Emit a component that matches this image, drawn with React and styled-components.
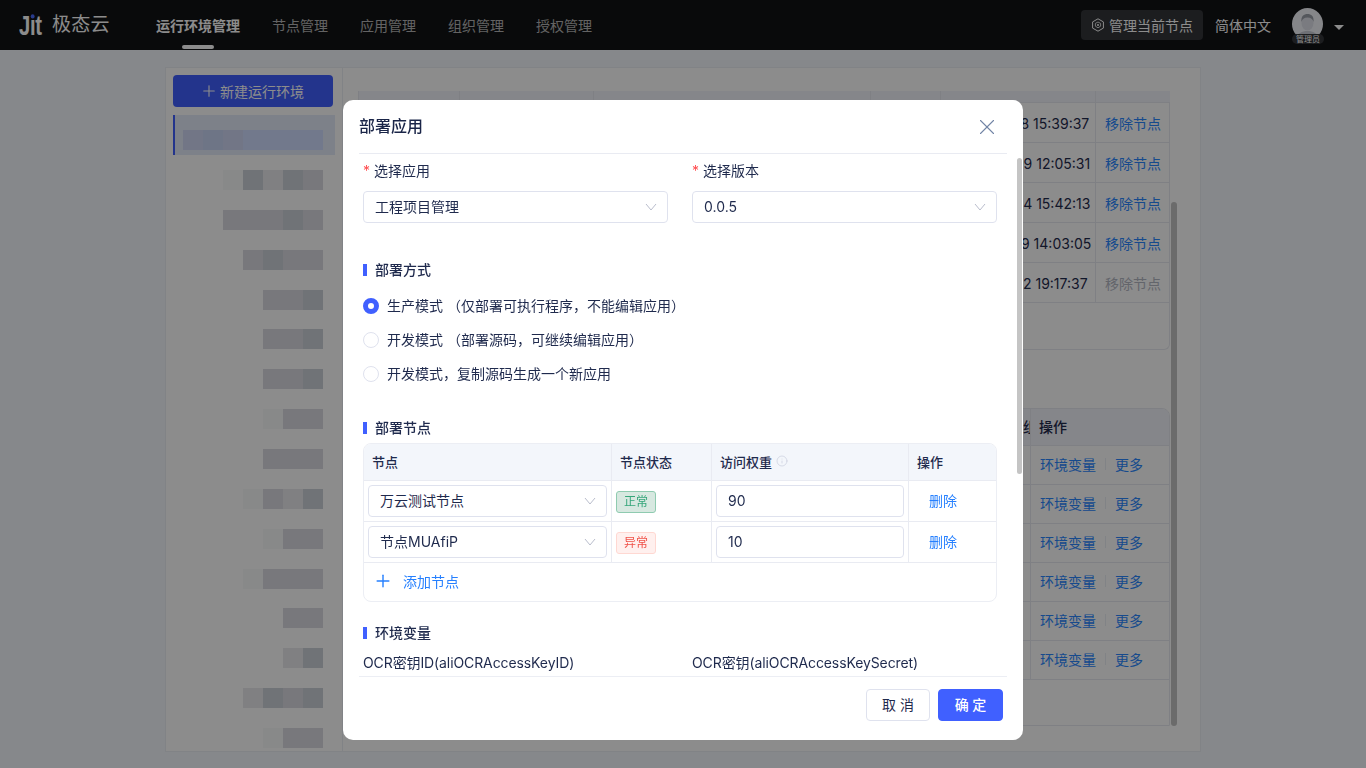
import styled, { createGlobalStyle } from 'styled-components';
import { Plus, X, Info } from 'lucide-react';

const navItems = ['运行环境管理', '节点管理', '应用管理', '组织管理', '授权管理'];

// 左侧列表是打码的，每行是从左到右的色块深浅（靠右对齐）
const activeRow = [5, 6, 5, 7, 7, 7, 7];
const blurRows = [
	[1, 4, 2, 4, 3],
	[3, 3, 3, 4, 3],
	[3, 4, 3, 3],
	[3, 3, 4],
	[3, 3, 4],
	[3, 3, 4],
	[1, 3, 3],
	[3, 3, 3],
	[1, 3, 2, 4],
	[1, 3, 3],
	[1, 3, 3, 3],
	[3, 3],
	[2, 4],
	[2, 4, 3, 4],
	[1, 3, 3],
];

const nodeTimes = [
	{ time: '2023-05-18 15:39:37' },
	{ time: '2023-05-09 12:05:31' },
	{ time: '2023-04-24 15:42:13' },
	{ time: '2023-04-19 14:03:05' },
	{ time: '2023-03-22 19:17:37', disabled: true },
];

const nodes = [
	{ name: '万云测试节点', ok: true, weight: 90 },
	{ name: '节点MUAfiP', ok: false, weight: 10 },
];

function Chevron() {
	return (
		<ChevronIcon width="12" height="8" viewBox="0 0 12 8">
			<path d="M1 1l5 6 5-6" fill="none" stroke="currentColor" strokeWidth="1" />
		</ChevronIcon>
	);
}

function App() {
	return (
		<>
			<GlobalStyle />
			<Page>
				<Header>
					<Logo>
						<LogoMark>
							Jit
							<LogoDot />
						</LogoMark>
						<LogoName>极态云</LogoName>
					</Logo>
					<Nav>
						{navItems.map((item, i) => (
							<NavItem key={item} $active={i === 0}>
								{item}
							</NavItem>
						))}
					</Nav>
					<HeaderRight>
						<ManageButton>
							<svg width="14" height="14" viewBox="0 0 14 14" fill="none">
								<path d="M7 .8l5.400 3.100v6.200L7 13.200 1.600 10.100V3.900z" stroke="currentColor" />
								<path d="M4.400 5.400L7 4l2.600 1.400v2.800L7 9.800 4.400 8.200z" stroke="currentColor" strokeWidth=".8" />
								<circle cx="7" cy="6.900" r="1" fill="currentColor" />
							</svg>
							管理当前节点
						</ManageButton>
						<Lang>简体中文</Lang>
						<Avatar>
							<svg width="31" height="32" viewBox="0 0 31 32">
								<ellipse cx="15.500" cy="16" rx="15.500" ry="16" fill="#f2f4fa" />
								<path d="M4 32c1-7 6-9 11.500-9S26 25 27 32z" fill="#c9ccd6" />
								<ellipse cx="15.500" cy="15" rx="6" ry="7.500" fill="#dee1ea" />
								<path d="M9.500 14c-.8-6 2.500-8 6-8s6.800 2 6 8c-.8-3-2.500-4.500-6-4.500s-5.200 1.500-6 4.500z" fill="#9a9ea8" />
							</svg>
							<AvatarBadge>管理员</AvatarBadge>
						</Avatar>
						<Caret />
					</HeaderRight>
				</Header>

				<Panel>
					<Sidebar>
						<NewButton>
							<Plus size={18} strokeWidth={1.5} />
							新建运行环境
						</NewButton>
						<EnvList>
							<EnvItem $active>
								{activeRow.map((tone, j) => (
									<BlurCell key={j} $tone={tone} />
								))}
							</EnvItem>
							{blurRows.map((cells, i) => (
								<EnvItem key={i}>
									{cells.map((tone, j) => (
										<BlurCell key={j} $tone={tone} />
									))}
								</EnvItem>
							))}
						</EnvList>
					</Sidebar>
					<Main>
						<NodeTable>
							<NodeHead />
							<NodeHead />
							<NodeHead />
							<NodeHead />
							<NodeHead />
							<NodeHead />
							{nodeTimes.map((row) => (
								<NodeRow key={row.time}>
									<NodeCell />
									<NodeCell />
									<NodeCell />
									<NodeCell />
									<NodeCell>{row.time}</NodeCell>
									<NodeCell>
										<TextLink $disabled={row.disabled}>移除节点</TextLink>
									</NodeCell>
								</NodeRow>
							))}
						</NodeTable>
						<Pager />
						<AppTable>
							<AppHead>所属组</AppHead>
							<AppHead $action>操作</AppHead>
							{[0, 1, 2, 3, 4, 5].map((i) => (
								<AppRow key={i}>
									<AppCell />
									<AppCell $action>
										<TextLink>环境变量</TextLink>
										<LinkDivider />
										<TextLink>更多</TextLink>
									</AppCell>
								</AppRow>
							))}
						</AppTable>
						<PageScrollbar />
					</Main>
				</Panel>

				<Mask>
					<Modal>
						<ModalHead>
							<ModalTitle>部署应用</ModalTitle>
							<X size={26} strokeWidth={1} color="#7385a6" />
						</ModalHead>
						<ModalBody>
							<FieldGrid>
								<Field>
									<FieldLabel $required>选择应用</FieldLabel>
									<Select>
										工程项目管理
										<Chevron />
									</Select>
								</Field>
								<Field>
									<FieldLabel $required>选择版本</FieldLabel>
									<Select>
										0.0.5
										<Chevron />
									</Select>
								</Field>
							</FieldGrid>

							<SectionTitle $top={36}>部署方式</SectionTitle>
							<RadioGroup>
								<RadioRow>
									<Radio $checked />
									生产模式 （仅部署可执行程序，不能编辑应用）
								</RadioRow>
								<RadioRow>
									<Radio />
									开发模式 （部署源码，可继续编辑应用）
								</RadioRow>
								<RadioRow>
									<Radio />
									开发模式，复制源码生成一个新应用
								</RadioRow>
							</RadioGroup>

							<SectionTitle $top={32}>部署节点</SectionTitle>
							<DeployTable>
								<DeployHead>节点</DeployHead>
								<DeployHead>节点状态</DeployHead>
								<DeployHead>
									访问权重
									<Info size={12} strokeWidth={1.2} color="#c3c8d8" />
								</DeployHead>
								<DeployHead $last>操作</DeployHead>
								{nodes.map((node) => (
									<DeployRow key={node.name}>
										<DeployCell>
											<Select>
												{node.name}
												<Chevron />
											</Select>
										</DeployCell>
										<DeployCell>
											<StatusTag $ok={node.ok}>{node.ok ? '正常' : '异常'}</StatusTag>
										</DeployCell>
										<DeployCell>
											<WeightInput>{node.weight}</WeightInput>
										</DeployCell>
										<ActionCell>
											<BlueText>删除</BlueText>
										</ActionCell>
									</DeployRow>
								))}
								<AddRow>
									<Plus size={20} strokeWidth={1.7} />
									添加节点
								</AddRow>
							</DeployTable>

							<SectionTitle $top={20}>环境变量</SectionTitle>
							<EnvGrid>
								<span>OCR密钥ID(aliOCRAccessKeyID)</span>
								<span>OCR密钥(aliOCRAccessKeySecret)</span>
							</EnvGrid>
						</ModalBody>
						<ModalFoot>
							<FootButton>取 消</FootButton>
							<FootButton $primary>确 定</FootButton>
						</ModalFoot>
						<ModalScrollbar />
					</Modal>
				</Mask>
			</Page>
		</>
	);
}

const GlobalStyle = createGlobalStyle`
	* {
		box-sizing: border-box;
	}
	html, body {
		margin: 0;
		padding: 0;
		height: 100%;
		overflow: hidden;
	}
	body {
		font-family: Inter, "Noto Sans CJK SC", sans-serif;
		font-size: 14px;
		color: #1f2a4d;
	}
`;

const Page = styled.div`
	height: 768px;
	background: #f5f7fe;
	display: flex;
	flex-direction: column;
`;

const Header = styled.header`
	height: 50px;
	flex: none;
	background: #121315;
	display: flex;
	align-items: center;
	padding-left: 19px;
`;

const Logo = styled.div`
	width: 137px;
	display: flex;
	align-items: center;
	gap: 10px;
	color: #fff;
`;

const LogoMark = styled.span`
	position: relative;
	display: inline-block;
	font-family: "Liberation Sans", sans-serif;
	font-weight: 700;
	font-size: 26px;
	line-height: 30px;
	width: 23px;
	letter-spacing: -0.5px;
	white-space: nowrap;
	transform: scale(0.78, 1.07);
	transform-origin: left center;
`;

const LogoDot = styled.i`
	position: absolute;
	left: 15px;
	top: 5px;
	width: 5px;
	height: 4px;
	border-radius: 50%;
	background: #4a6cff;
	box-shadow: 0 0 0 1px #121315;
`;

const LogoName = styled.span`
	font-size: 19px;
	letter-spacing: 0.3px;
	line-height: 30px;
`;

const Nav = styled.nav`
	display: flex;
	gap: 32px;
	height: 100%;
`;

const NavItem = styled.a`
	position: relative;
	line-height: 52px;
	color: ${(p) => (p.$active ? '#fff' : 'rgba(255, 255, 255, 0.7)')};
	font-weight: ${(p) => (p.$active ? 600 : 400)};
	&::after {
		content: '';
		display: ${(p) => (p.$active ? 'block' : 'none')};
		position: absolute;
		left: 26px;
		bottom: 1px;
		width: 32px;
		height: 4px;
		border-radius: 2px;
		background: #fff;
	}
`;

const HeaderRight = styled.div`
	margin-left: auto;
	display: flex;
	align-items: center;
	padding-right: 22px;
`;

const ManageButton = styled.div`
	width: 122px;
	height: 30px;
	border-radius: 4px;
	background: #33353a;
	color: #fff;
	display: flex;
	align-items: center;
	justify-content: center;
	gap: 4px;
`;

const Lang = styled.span`
	color: #fff;
	margin: 0 21px 0 12px;
`;

const Avatar = styled.div`
	position: relative;
	width: 31px;
	height: 32px;
	margin-top: -2px;
`;

const AvatarBadge = styled.span`
	position: absolute;
	left: 0;
	bottom: -4px;
	width: 32px;
	height: 10px;
	border-radius: 5px;
	background: #33353a;
	color: #fff;
	font-size: 8px;
	line-height: 10px;
	text-align: center;
`;

const Caret = styled.i`
	margin: 4px 0 0 11px;
	border-left: 5px solid transparent;
	border-right: 5px solid transparent;
	border-top: 5px solid #fff;
`;

const Panel = styled.div`
	margin: 17px 165px 16px;
	flex: 1;
	display: flex;
	background: #fff;
	border: 1px solid #eceef4;
	min-height: 0;
`;

const Sidebar = styled.aside`
	width: 177px;
	flex: none;
	border-right: 1px solid #eceef4;
	padding: 7px 7px 0;
	overflow: hidden;
`;

const NewButton = styled.div`
	width: 160px;
	height: 32px;
	border-radius: 4px;
	background: #4060ff;
	color: #fff;
	display: flex;
	align-items: center;
	padding-left: 27px;
	gap: 2px;
`;

const EnvList = styled.div`
	margin-top: 8px;
`;

const EnvItem = styled.div`
	height: ${(p) => (p.$active ? '40px' : '39.87px')};
	width: 162px;
	padding: 15px 12px 0 0;
	display: flex;
	justify-content: flex-end;
	background: ${(p) => (p.$active ? '#e3ebfa' : 'transparent')};
	border-left: 2px solid ${(p) => (p.$active ? '#4060ff' : 'transparent')};
`;

const blurTones = ['#fff', '#f7f9f9', '#e9eaed', '#dadbe2', '#cdd1d9', '#d0d7f5', '#c8d6f5', '#cfdcff'];

const BlurCell = styled.i`
	flex: 0 0 20px;
	height: 20px;
	background: ${(p) => blurTones[p.$tone]};
`;

const Main = styled.main`
	position: relative;
	flex: 1;
	min-width: 0;
	padding: 23px 30px 25px 15px;
	display: flex;
	flex-direction: column;
	overflow: hidden;
`;

const NodeTable = styled.div`
	display: grid;
	grid-template-columns: 101px 134px 277px 70px 155px 75px;
	flex: none;
`;

const NodeHead = styled.div`
	height: 12px;
	background: #f2f4fb;
	border-left: 1px solid #e8eaf1;
	border-bottom: 1px solid #e8eaf1;
`;

const NodeRow = styled.div`
	display: contents;
`;

const NodeCell = styled.div`
	height: 40px;
	padding-left: 10px;
	border-bottom: 1px solid #e8eaf1;
	line-height: 41px;
	white-space: nowrap;
	&:last-child {
		padding-left: 9px;
		border-left: 1px solid #e8eaf1;
		border-right: 1px solid #e8eaf1;
	}
`;

const TextLink = styled.span`
	color: ${(p) => (p.$disabled ? '#b4b8c4' : '#2a88ff')};
`;

const Pager = styled.div`
	height: 47px;
	flex: none;
	border-bottom: 1px solid #e8eaf1;
	border-right: 1px solid #e8eaf1;
	border-bottom-right-radius: 6px;
`;

const AppTable = styled.div`
	margin-top: 58px;
	flex: 1;
	display: grid;
	grid-template-columns: 671px 140px;
	grid-template-rows: 37px repeat(6, 39px);
	border: 1px solid #e8eaf1;
	border-radius: 8px 8px 0 0;
	overflow: hidden;
`;

const AppHead = styled.div`
	background: #f2f4fb;
	border-bottom: 1px solid #e8eaf1;
	font-weight: 500;
	line-height: 36px;
	${(p) => (p.$action ? 'padding-left: 8px; border-left: 1px solid #e8eaf1;' : 'text-align: right; overflow: hidden; white-space: nowrap; direction: rtl; text-indent: -7px;')}
`;

const AppRow = styled.div`
	display: contents;
`;

const AppCell = styled.div`
	border-bottom: 1px solid #e8eaf1;
	display: flex;
	align-items: center;
	padding-bottom: 2px;
	${(p) => p.$action && 'padding-left: 9px; border-left: 1px solid #e8eaf1;'}
`;

const LinkDivider = styled.i`
	width: 1px;
	height: 12px;
	background: #eceef4;
	margin: 0 9px;
`;

const PageScrollbar = styled.i`
	position: absolute;
	top: 134px;
	right: 23px;
	width: 6px;
	height: 524px;
	border-radius: 3px;
	background: #c4c4c4;
`;

const Mask = styled.div`
	position: fixed;
	inset: 0;
	background: rgba(0, 0, 0, 0.45);
	display: flex;
	justify-content: center;
	align-items: flex-start;
	padding-top: 100px;
`;

const Modal = styled.section`
	position: relative;
	width: 680px;
	height: 640px;
	background: #fff;
	border-radius: 10px;
	display: flex;
	flex-direction: column;
	overflow: hidden;
`;

const ModalHead = styled.div`
	height: 54px;
	flex: none;
	margin: 0 16px;
	border-bottom: 1px solid #e9ebf2;
	display: flex;
	align-items: center;
	justify-content: space-between;
	padding-right: 7px;
`;

const ModalTitle = styled.h2`
	margin: 0 0 4px;
	font-size: 16px;
	font-weight: 500;
	color: #1a2548;
`;

const ModalBody = styled.div`
	flex: 1;
	min-height: 0;
	overflow: hidden;
	padding: 6px 26px 0 20px;
`;

const FieldGrid = styled.div`
	display: grid;
	grid-template-columns: 305px 305px;
	gap: 24px;
`;

const Field = styled.div`
	display: flex;
	flex-direction: column;
	gap: 9px;
`;

const FieldLabel = styled.label`
	line-height: 22px;
	&::before {
		content: '*';
		color: #ff4d4f;
		margin-right: 4px;
	}
`;

const Select = styled.div`
	height: 32px;
	width: 100%;
	border: 1px solid #dfe2ee;
	border-radius: 4px;
	padding: 0 10px 2px 11px;
	display: flex;
	align-items: center;
	justify-content: space-between;
	background: #fff;
`;

const ChevronIcon = styled.svg`
	color: #b9bdcc;
	flex: none;
	margin-top: 2px;
`;

const SectionTitle = styled.h3`
	margin: ${(p) => p.$top}px 0 0;
	padding-left: 12px;
	position: relative;
	font-size: 14px;
	font-weight: 500;
	line-height: 22px;
	&::before {
		content: '';
		position: absolute;
		left: 0;
		top: 5px;
		width: 4px;
		height: 12px;
		background: #4060ff;
	}
`;

const RadioGroup = styled.div`
	margin-top: 14px;
	display: flex;
	flex-direction: column;
	gap: 12px;
`;

const RadioRow = styled.div`
	display: flex;
	align-items: center;
	gap: 8px;
	line-height: 22px;
`;

const Radio = styled.i`
	width: 16px;
	height: 16px;
	border-radius: 50%;
	background: #fff;
	border: ${(p) => (p.$checked ? '5px solid #4060ff' : '1px solid #dfe2ee')};
`;

const DeployTable = styled.div`
	margin-top: 4px;
	display: grid;
	grid-template-columns: 248px 100px 197px 87px;
	border: 1px solid #eceef4;
	border-radius: 8px;
	overflow: hidden;
`;

const DeployHead = styled.div`
	height: 37px;
	background: #f3f6fb;
	border-bottom: 1px solid #e9ebf2;
	border-right: ${(p) => (p.$last ? 'none' : '1px solid #e9ebf2')};
	padding: 0 0 2px 8px;
	display: flex;
	align-items: center;
	gap: 4px;
	font-weight: 500;
	font-size: 13px;
`;

const DeployRow = styled.div`
	display: contents;
`;

const DeployCell = styled.div`
	height: 41px;
	border-bottom: 1px solid #e9ebf2;
	border-right: 1px solid #e9ebf2;
	padding: 4px;
	display: flex;
	align-items: flex-start;
`;

const ActionCell = styled.div`
	height: 41px;
	border-bottom: 1px solid #e9ebf2;
	padding: 0 0 3px 20px;
	display: flex;
	align-items: center;
`;

const StatusTag = styled.span`
	margin-top: 6px;
	width: 40px;
	height: 22px;
	border-radius: 3px;
	border: 1px solid ${(p) => (p.$ok ? '#8fcbb0' : '#ffd8d2')};
	background: ${(p) => (p.$ok ? '#d7e8e0' : '#fff0ee')};
	color: ${(p) => (p.$ok ? '#36a67a' : '#f0524a')};
	font-size: 12px;
	line-height: 20px;
	text-align: center;
`;

const WeightInput = styled.div`
	width: 100%;
	height: 32px;
	border: 1px solid #dfe2ee;
	border-radius: 4px;
	padding-left: 11px;
	line-height: 30px;
`;

const BlueText = styled.span`
	color: #2680ff;
`;

const AddRow = styled.div`
	grid-column: 1 / -1;
	height: 38px;
	color: #2680ff;
	padding: 0 0 2px 9px;
	display: flex;
	align-items: center;
	gap: 10px;
`;

const EnvGrid = styled.div`
	margin-top: 8px;
	display: grid;
	grid-template-columns: 305px 305px;
	gap: 24px;
	line-height: 22px;
	white-space: nowrap;
	letter-spacing: -0.1px;
`;

const ModalFoot = styled.div`
	height: 64px;
	flex: none;
	margin: 0 16px;
	border-top: 1px solid #eceef4;
	padding: 0 4px 7px 0;
	display: flex;
	align-items: center;
	justify-content: flex-end;
	gap: 8px;
`;

const FootButton = styled.div`
	width: ${(p) => (p.$primary ? 65 : 64)}px;
	height: 32px;
	border-radius: 4px;
	border: 1px solid ${(p) => (p.$primary ? '#4060ff' : '#dfe2ee')};
	background: ${(p) => (p.$primary ? '#4060ff' : '#fff')};
	color: ${(p) => (p.$primary ? '#fff' : '#1f2a4d')};
	font-weight: ${(p) => (p.$primary ? 500 : 400)};
	text-align: center;
	line-height: 30px;
`;

const ModalScrollbar = styled.i`
	position: absolute;
	right: 1px;
	top: 58px;
	width: 5px;
	height: 316px;
	border-radius: 3px;
	background: #c4c4c4;
`;

export default App;
